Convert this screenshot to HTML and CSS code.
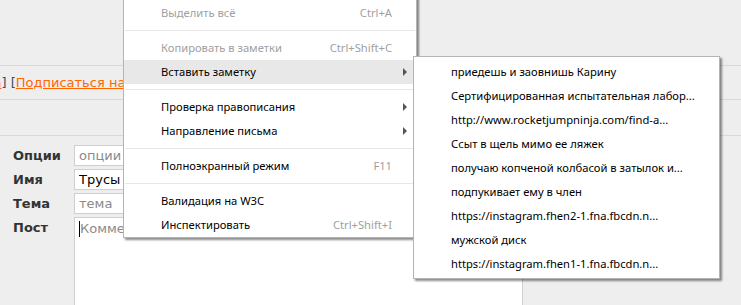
FILE: index.html
```html
<!DOCTYPE html>
<html lang="ru">
<head>
<meta charset="utf-8">
<title>Форма</title>
<link rel="stylesheet" href="styles.css">
</head>
<body>
<div class="page">
  <div class="band band-top"></div>
  <div class="band band-links">
    <span class="cut"><a class="lnk" href="#">на</a></span><span class="br">]</span> <span class="br">[</span><a class="lnk" href="#">Подписаться на тред</a><span class="br">]</span>
  </div>
  <div class="band band-gap"></div>
  <form class="postform">
    <label class="lbl">Опции</label>
    <input class="fld" type="text" placeholder="опции">
    <label class="lbl">Имя</label>
    <input class="fld" type="text" value="Трусы">
    <label class="lbl">Тема</label>
    <input class="fld" type="text" placeholder="тема">
    <label class="lbl">Пост</label>
    <div class="ta"><span class="caret"></span><span class="ph">Комментарий</span></div>
  </form>
</div>

<div class="menu main-menu">
  <div class="item disabled"><span>Выделить всё</span><span class="sc">Ctrl+A</span></div>
  <div class="sep"></div>
  <div class="item disabled"><span>Копировать в заметки</span><span class="sc">Ctrl+Shift+C</span></div>
  <div class="item hover sub"><span>Вставить заметку</span></div>
  <div class="sep"></div>
  <div class="item sub"><span>Проверка правописания</span></div>
  <div class="item sub"><span>Направление письма</span></div>
  <div class="sep"></div>
  <div class="item"><span>Полноэкранный режим</span><span class="sc">F11</span></div>
  <div class="sep"></div>
  <div class="item"><span>Валидация на W3C</span></div>
  <div class="item"><span>Инспектировать</span><span class="sc">Ctrl+Shift+I</span></div>
</div>

<div class="menu sub-menu">
  <div class="item">приедешь и заовнишь Карину</div>
  <div class="item">Сертифицированная испытательная лабор...</div>
  <div class="item">http://www.rocketjumpninja.com/find-a...</div>
  <div class="item">Ссыт в щель мимо ее ляжек</div>
  <div class="item">получаю копченой колбасой в затылок и...</div>
  <div class="item">подпукивает ему в член</div>
  <div class="item">https://instagram.fhen2-1.fna.fbcdn.n...</div>
  <div class="item">мужской диск</div>
  <div class="item">https://instagram.fhen1-1.fna.fbcdn.n...</div>
</div>
</body>
</html>
```

FILE: styles.css
```css
html, body {
  margin: 0;
  padding: 0;
}
body {
  width: 741px;
  height: 305px;
  overflow: hidden;
  background: #eeeeee;
  position: relative;
  font-family: "DejaVu Sans", Verdana, sans-serif;
  font-size: 13px;
}
.page {
  display: flex;
  flex-direction: column;
}
.band {
  border-bottom: 1px solid #d9d9d9;
}
.band-top { height: 65px; }
.band-links {
  height: 33px;
  line-height: 34px;
  white-space: nowrap;
  color: #34495e;
}
.cut { margin-left: -15px; }
.lnk {
  color: #ff6600;
  text-decoration: underline;
}
.br { color: #3b4a5a; }
.band-gap { height: 35px; }

.postform {
  display: grid;
  grid-template-columns: 61px auto;
  row-gap: 3px;
  padding: 9px 0 0 13px;
  align-items: start;
}
.lbl {
  font-weight: bold;
  color: #333;
  font-size: 13px;
  line-height: 21px;
}
.fld {
  box-sizing: border-box;
  height: 21px;
  width: 300px;
  margin: 0;
  border: 1px solid #cfcfcf;
  background: #fff;
  font-family: "DejaVu Sans", Verdana, sans-serif;
  font-size: 13px;
  padding: 0 4px;
  color: #000;
  outline: none;
}
.fld::placeholder { color: #8a8a8a; }
.ta {
  box-sizing: border-box;
  width: 449px;
  height: 88px;
  border: 1px solid #cfcfcf;
  border-bottom: none;
  background: #fff;
  padding: 2px 4px;
  color: #8a8a8a;
  line-height: 17px;
  display: flex;
  align-items: flex-start;
}
.caret {
  display: inline-block;
  width: 1px;
  height: 16px;
  background: #000;
  margin-top: 1px;
}

.menu {
  position: absolute;
  box-sizing: border-box;
  background: #fff;
  border: 1px solid #b4b4b4;
  box-shadow: 2px 2px 2px rgba(0,0,0,0.45);
  font-family: "Noto Sans", "Open Sans", sans-serif;
  font-size: 11.2px;
  color: #000;
}
.main-menu {
  left: 123px;
  top: -4px;
  width: 294px;
  padding: 4px 0 0;
}
.sub-menu {
  left: 413px;
  top: 56px;
  width: 307px;
  padding: 3px 0 2px;
}
.item {
  height: 24px;
  line-height: 24px;
  padding: 0 24px 0 37px;
  display: flex;
  justify-content: space-between;
  position: relative;
  white-space: nowrap;
}
.item.disabled { color: #a0a0a0; }
.item.hover { background: #e8e8e8; }
.sc { color: #a0a0a0; }
.item.sub::after {
  content: "";
  position: absolute;
  right: 9px;
  top: 8px;
  border-left: 4px solid #555;
  border-top: 4px solid transparent;
  border-bottom: 4px solid transparent;
}
.sep {
  height: 1px;
  background: #e6e6e6;
  margin: 5px 1px;
}
```
